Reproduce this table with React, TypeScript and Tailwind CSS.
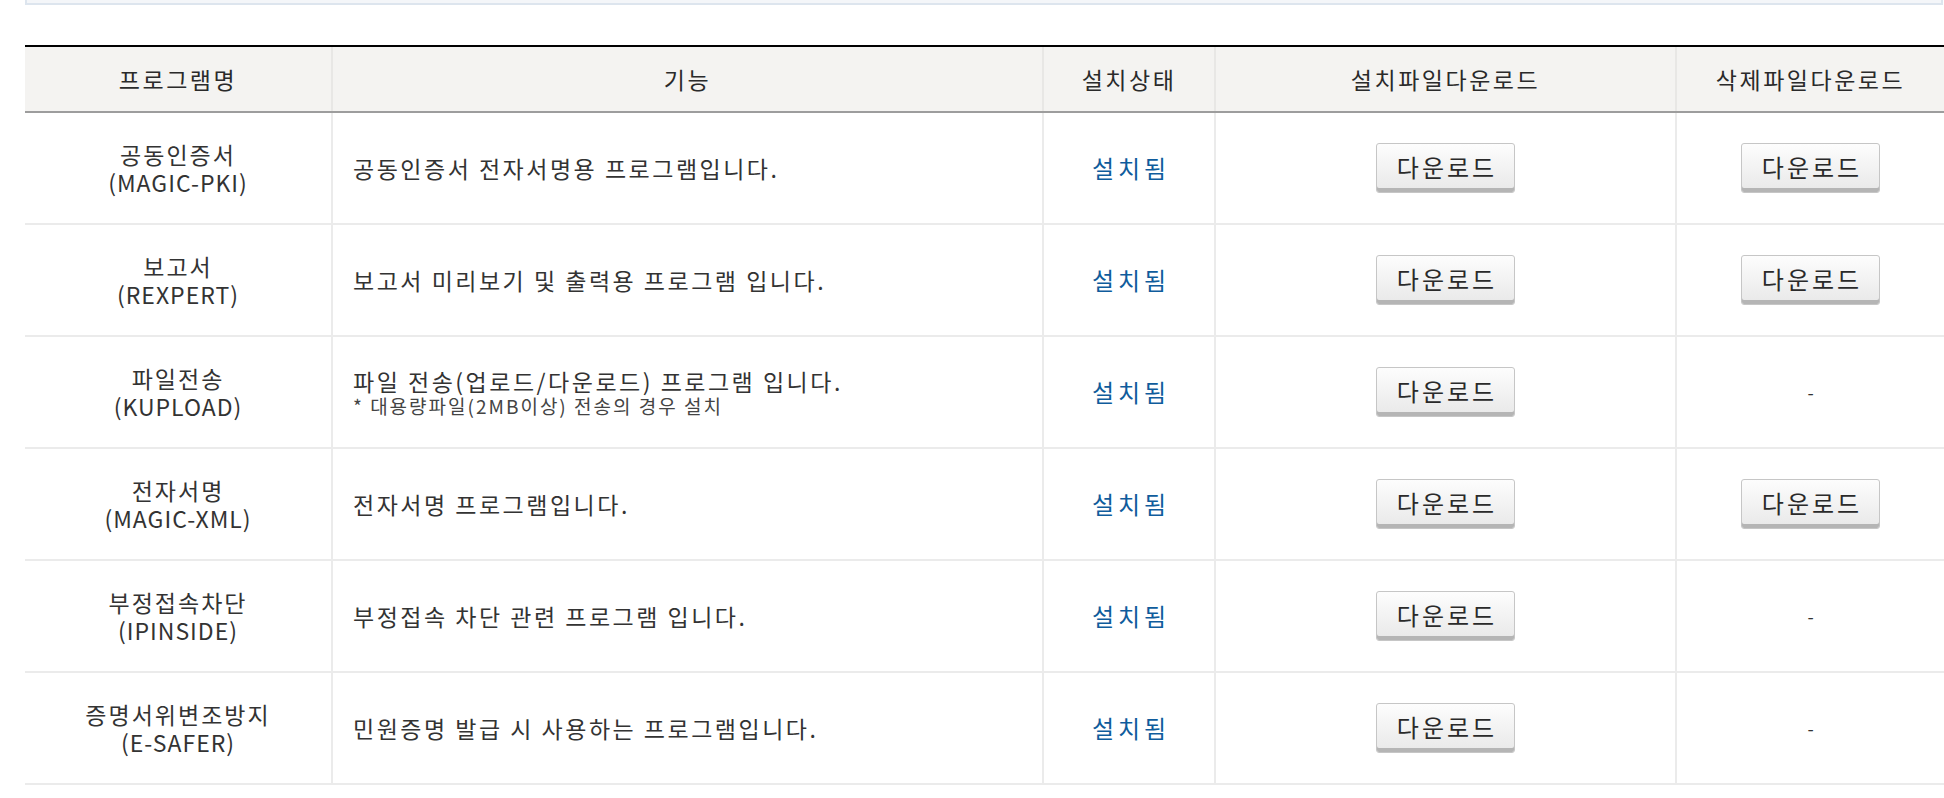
const COLS = "grid grid-cols-[306px_711px_172px_461px_1fr]";

type Row = {
  name: string;
  code: string;
  desc: string;
  note?: string;
  uninstall: boolean;
};

const ROWS: Row[] = [
  { name: "공동인증서", code: "(MAGIC-PKI)", desc: "공동인증서 전자서명용 프로그램입니다.", uninstall: true },
  { name: "보고서", code: "(REXPERT)", desc: "보고서 미리보기 및 출력용 프로그램 입니다.", uninstall: true },
  {
    name: "파일전송",
    code: "(KUPLOAD)",
    desc: "파일 전송(업로드/다운로드) 프로그램 입니다.",
    note: "* 대용량파일(2MB이상) 전송의 경우 설치",
    uninstall: false,
  },
  { name: "전자서명", code: "(MAGIC-XML)", desc: "전자서명 프로그램입니다.", uninstall: true },
  { name: "부정접속차단", code: "(IPINSIDE)", desc: "부정접속 차단 관련 프로그램 입니다.", uninstall: false },
  { name: "증명서위변조방지", code: "(E-SAFER)", desc: "민원증명 발급 시 사용하는 프로그램입니다.", uninstall: false },
];

function DownloadButton() {
  return (
    <button
      type="button"
      className="h-[50px] w-[139px] rounded-[3px] border border-[#c6c6c6] bg-gradient-to-b from-[#fdfdfd] to-[#e8e8e8] pb-[3px] pl-[3px] text-[24px] leading-none tracking-[3px] text-[#2a2a2a] shadow-[inset_0_-4px_0_#b5b5b5]"
    >
      다운로드
    </button>
  );
}

export default function App() {
  return (
    <div
      className="h-[798px] w-[1944px] overflow-hidden bg-white text-[#333]"
      style={{ fontFamily: '"Noto Sans CJK KR", "Noto Sans", sans-serif' }}
    >
      <div className="ml-[25px] mr-[1px] h-[5px] border-x-2 border-b-2 border-[#dde5ee] bg-[#f4f6f9]" />

      <div className="ml-[25px] mt-[40px] border-t-2 border-black">
        {/* header */}
        <div className={`${COLS} h-[66px] border-b-2 border-[#9d9d9d] bg-[#f4f3f1] text-[23px] tracking-[2.5px] text-[#2a2a2a]`}>
          <div className="flex items-center justify-center">프로그램명</div>
          <div className="flex items-center justify-center border-l-2 border-[#e8e7e5]">기능</div>
          <div className="flex items-center justify-center border-l-2 border-[#e8e7e5]">설치상태</div>
          <div className="flex items-center justify-center border-l-2 border-[#e8e7e5]">설치파일다운로드</div>
          <div className="flex items-center justify-center border-l-2 border-[#e8e7e5]">삭제파일다운로드</div>
        </div>

        {ROWS.map((r) => (
          <div key={r.code} className={`${COLS} h-[112px] border-b-2 border-[#ebebeb]`}>
            <div className="flex flex-col items-center justify-center text-[23px] leading-[28px]">
              <span className="tracking-[2px]">{r.name}</span>
              <span className="tracking-[1px]">{r.code}</span>
            </div>
            <div className="flex flex-col justify-center border-l-2 border-[#ebebeb] pl-[20px]">
              <span className="text-[23px] leading-[28px] tracking-[2.5px]">{r.desc}</span>
              {r.note && <span className="text-[19px] leading-[22px] tracking-[2px] text-[#444]">{r.note}</span>}
            </div>
            <div className="flex items-center justify-center border-l-2 border-[#ebebeb] pl-[4px] text-[24px] tracking-[4px] text-[#0f5c9c]">
              설치됨
            </div>
            <div className="flex items-center justify-center border-l-2 border-[#ebebeb]">
              <DownloadButton />
            </div>
            <div className="flex items-center justify-center border-l-2 border-[#ebebeb] text-[18px]">
              {r.uninstall ? <DownloadButton /> : "-"}
            </div>
          </div>
        ))}
      </div>
    </div>
  );
}
